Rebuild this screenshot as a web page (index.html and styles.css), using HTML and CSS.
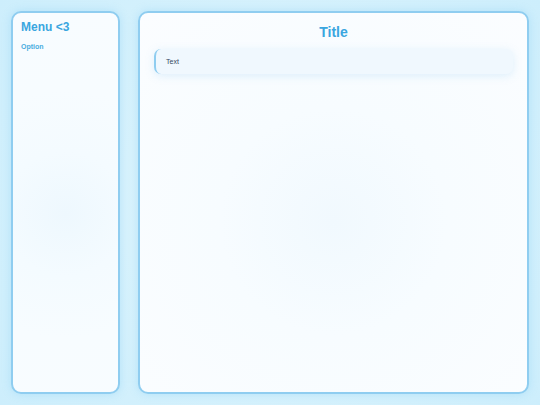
FILE: index.html
```html
<!DOCTYPE html>
<html>
<head>
<meta charset="utf-8">
<link rel="stylesheet" href="styles.css">
</head>
<body>
<div class="app">
  <aside class="sidebar">
    <h2 class="menu-title">Menu &lt;3</h2>
    <div class="option">Option</div>
  </aside>
  <main class="main">
    <h1 class="title">Title</h1>
    <div class="card">Text</div>
  </main>
</div>
</body>
</html>
```
FILE: styles.css
```css
html, body {
  margin: 0;
  padding: 0;
  height: 100%;
}
body {
  background: radial-gradient(circle at 50% 50%, #dff5fd 0%, #cdeefc 100%);
  font-family: "Liberation Sans", Arial, sans-serif;
}
.app {
  box-sizing: border-box;
  height: 405px;
  padding: 11px;
  display: flex;
  gap: 18px;
}
.sidebar, .main {
  box-sizing: border-box;
  border: 2px solid #8fcdf0;
  border-radius: 10px;
  box-shadow: 0 0 8px rgba(120, 200, 240, 0.35);
}
.sidebar {
  width: 109px;
  padding: 7px 8px;
  background: radial-gradient(circle at 50% 53%, #eef8fe 0%, #f4fbff 30%, #f7fcff 60%, #f8fcff 100%);
}
.main {
  flex: 1;
  padding: 10px 14px;
  background: radial-gradient(circle at 50% 55%, #f1f9fe 0%, #f7fcff 40%, #fbfdff 100%);
}
.menu-title {
  margin: 0;
  font-size: 12px;
  font-weight: bold;
  color: #3aa6e0;
  line-height: 14px;
}
.option {
  margin-top: 9px;
  font-size: 7px;
  font-weight: bold;
  color: #4aace0;
}
.title {
  margin: 0;
  text-align: center;
  font-size: 14px;
  font-weight: bold;
  color: #3aa6e0;
  line-height: 18px;
}
.card {
  margin-top: 8px;
  height: 25px;
  box-sizing: border-box;
  border-left: 2px solid #8fcdf0;
  border-radius: 7px;
  background: #f0f8fe;
  box-shadow: 0 2px 8px rgba(140, 200, 240, 0.25);
  padding-left: 10px;
  display: flex;
  align-items: center;
  font-size: 7px;
  color: #34495e;
}
```
